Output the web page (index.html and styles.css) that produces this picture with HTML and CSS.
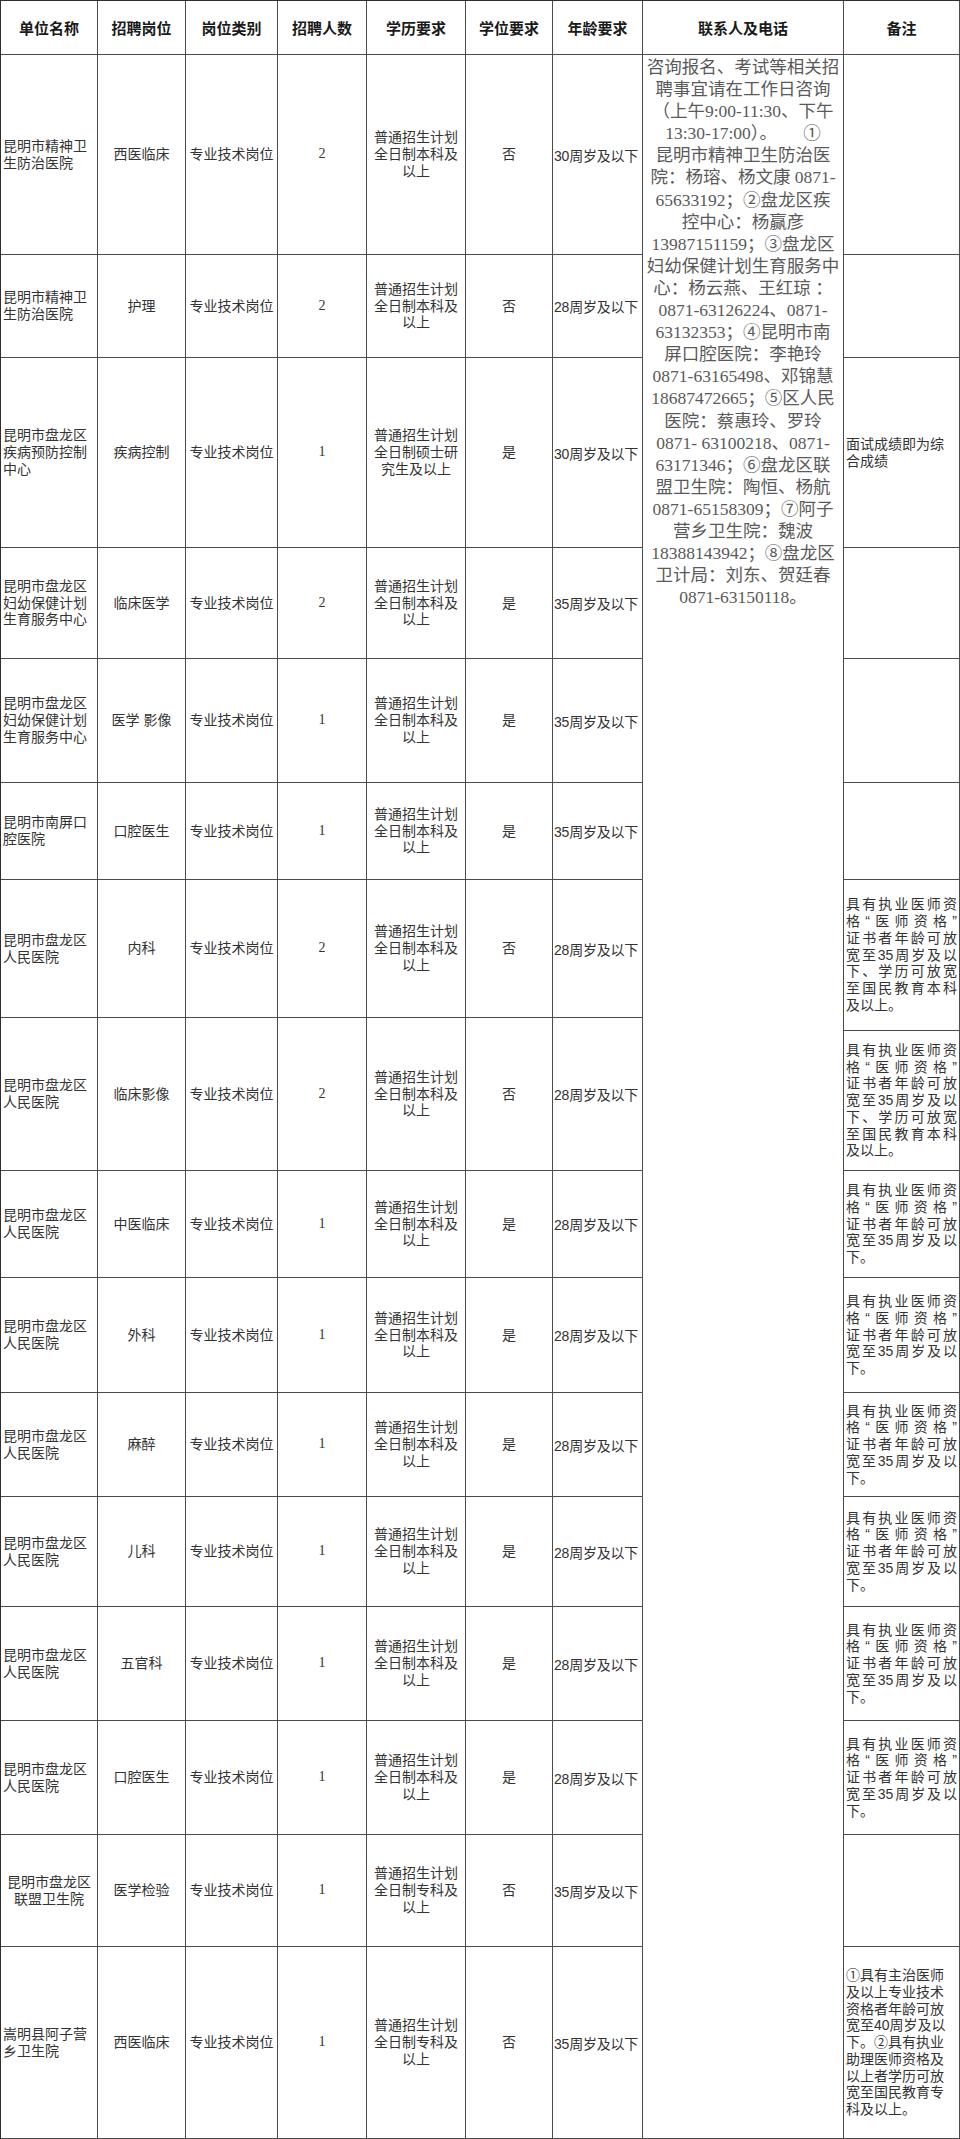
FILE: index.html
```html
<!DOCTYPE html>
<html lang="zh-CN">
<head>
<meta charset="utf-8">
<title>招聘岗位表</title>
<link rel="stylesheet" href="styles.css">
</head>
<body>
<div class="sheet">
  <div class="main">
    <div class="cell head">单位名称</div>
    <div class="cell head">招聘岗位</div>
    <div class="cell head">岗位类别</div>
    <div class="cell head">招聘人数</div>
    <div class="cell head">学历要求</div>
    <div class="cell head">学位要求</div>
    <div class="cell head">年龄要求</div>

    <div class="cell unit">昆明市精神卫生防治医院</div>
    <div class="cell mid">西医临床</div>
    <div class="cell mid">专业技术岗位</div>
    <div class="cell mid num">2</div>
    <div class="cell mid edu">普通招生计划全日制本科及以上</div>
    <div class="cell mid">否</div>
    <div class="cell age">30周岁及以下</div>

    <div class="cell unit">昆明市精神卫生防治医院</div>
    <div class="cell mid">护理</div>
    <div class="cell mid">专业技术岗位</div>
    <div class="cell mid num">2</div>
    <div class="cell mid edu">普通招生计划全日制本科及以上</div>
    <div class="cell mid">否</div>
    <div class="cell age">28周岁及以下</div>

    <div class="cell unit">昆明市盘龙区疾病预防控制中心</div>
    <div class="cell mid">疾病控制</div>
    <div class="cell mid">专业技术岗位</div>
    <div class="cell mid num">1</div>
    <div class="cell mid edu">普通招生计划全日制硕士研究生及以上</div>
    <div class="cell mid">是</div>
    <div class="cell age">30周岁及以下</div>

    <div class="cell unit">昆明市盘龙区妇幼保健计划生育服务中心</div>
    <div class="cell mid">临床医学</div>
    <div class="cell mid">专业技术岗位</div>
    <div class="cell mid num">2</div>
    <div class="cell mid edu">普通招生计划全日制本科及以上</div>
    <div class="cell mid">是</div>
    <div class="cell age">35周岁及以下</div>

    <div class="cell unit">昆明市盘龙区妇幼保健计划生育服务中心</div>
    <div class="cell mid">医学&nbsp;影像</div>
    <div class="cell mid">专业技术岗位</div>
    <div class="cell mid num">1</div>
    <div class="cell mid edu">普通招生计划全日制本科及以上</div>
    <div class="cell mid">是</div>
    <div class="cell age">35周岁及以下</div>

    <div class="cell unit">昆明市南屏口腔医院</div>
    <div class="cell mid">口腔医生</div>
    <div class="cell mid">专业技术岗位</div>
    <div class="cell mid num">1</div>
    <div class="cell mid edu">普通招生计划全日制本科及以上</div>
    <div class="cell mid">是</div>
    <div class="cell age">35周岁及以下</div>

    <div class="cell unit">昆明市盘龙区人民医院</div>
    <div class="cell mid">内科</div>
    <div class="cell mid">专业技术岗位</div>
    <div class="cell mid num">2</div>
    <div class="cell mid edu">普通招生计划全日制本科及以上</div>
    <div class="cell mid">否</div>
    <div class="cell age">28周岁及以下</div>

    <div class="cell unit">昆明市盘龙区人民医院</div>
    <div class="cell mid">临床影像</div>
    <div class="cell mid">专业技术岗位</div>
    <div class="cell mid num">2</div>
    <div class="cell mid edu">普通招生计划全日制本科及以上</div>
    <div class="cell mid">否</div>
    <div class="cell age">28周岁及以下</div>

    <div class="cell unit">昆明市盘龙区人民医院</div>
    <div class="cell mid">中医临床</div>
    <div class="cell mid">专业技术岗位</div>
    <div class="cell mid num">1</div>
    <div class="cell mid edu">普通招生计划全日制本科及以上</div>
    <div class="cell mid">是</div>
    <div class="cell age">28周岁及以下</div>

    <div class="cell unit">昆明市盘龙区人民医院</div>
    <div class="cell mid">外科</div>
    <div class="cell mid">专业技术岗位</div>
    <div class="cell mid num">1</div>
    <div class="cell mid edu">普通招生计划全日制本科及以上</div>
    <div class="cell mid">是</div>
    <div class="cell age">28周岁及以下</div>

    <div class="cell unit">昆明市盘龙区人民医院</div>
    <div class="cell mid">麻醉</div>
    <div class="cell mid">专业技术岗位</div>
    <div class="cell mid num">1</div>
    <div class="cell mid edu">普通招生计划全日制本科及以上</div>
    <div class="cell mid">是</div>
    <div class="cell age">28周岁及以下</div>

    <div class="cell unit">昆明市盘龙区人民医院</div>
    <div class="cell mid">儿科</div>
    <div class="cell mid">专业技术岗位</div>
    <div class="cell mid num">1</div>
    <div class="cell mid edu">普通招生计划全日制本科及以上</div>
    <div class="cell mid">是</div>
    <div class="cell age">28周岁及以下</div>

    <div class="cell unit">昆明市盘龙区人民医院</div>
    <div class="cell mid">五官科</div>
    <div class="cell mid">专业技术岗位</div>
    <div class="cell mid num">1</div>
    <div class="cell mid edu">普通招生计划全日制本科及以上</div>
    <div class="cell mid">是</div>
    <div class="cell age">28周岁及以下</div>

    <div class="cell unit">昆明市盘龙区人民医院</div>
    <div class="cell mid">口腔医生</div>
    <div class="cell mid">专业技术岗位</div>
    <div class="cell mid num">1</div>
    <div class="cell mid edu">普通招生计划全日制本科及以上</div>
    <div class="cell mid">是</div>
    <div class="cell age">28周岁及以下</div>

    <div class="cell unit center">昆明市盘龙区联盟卫生院</div>
    <div class="cell mid">医学检验</div>
    <div class="cell mid">专业技术岗位</div>
    <div class="cell mid num">1</div>
    <div class="cell mid edu">普通招生计划全日制专科及以上</div>
    <div class="cell mid">否</div>
    <div class="cell age">35周岁及以下</div>

    <div class="cell unit">嵩明县阿子营乡卫生院</div>
    <div class="cell mid">西医临床</div>
    <div class="cell mid">专业技术岗位</div>
    <div class="cell mid num">1</div>
    <div class="cell mid edu">普通招生计划全日制专科及以上</div>
    <div class="cell mid">否</div>
    <div class="cell age">35周岁及以下</div>
  </div>

  <div class="contact">
    <div class="cell head">联系人及电话</div>
    <div class="cell contact-body">咨询报名、考试等相关招<br>聘事宜请在工作日咨询<br>（上午9:00-11:30、下午<br>13:30-17:00）。&nbsp;&nbsp;&nbsp;&nbsp;&nbsp;&nbsp;①<br>昆明市精神卫生防治医<br>院：杨瑢、杨文康 0871-<br>65633192；②盘龙区疾<br>控中心：杨赢彦<br>13987151159；③盘龙区<br>妇幼保健计划生育服务中<br>心：杨云燕、王红琼 ：<br>0871-63126224、0871-<br>63132353；④昆明市南<br>屏口腔医院：李艳玲<br>0871-63165498、邓锦慧<br>18687472665；⑤区人民<br>医院：蔡惠玲、罗玲<br>0871- 63100218、0871-<br>63171346；⑥盘龙区联<br>盟卫生院：陶恒、杨航<br>0871-65158309；⑦阿子<br>营乡卫生院：魏波<br>18388143942；⑧盘龙区<br>卫计局：刘东、贺廷春<br>0871-63150118。</div>
  </div>

  <div class="remarks">
    <div class="cell head">备注</div>
    <div class="cell note"></div>
    <div class="cell note"></div>
    <div class="cell note"><div class="lines">面试成绩即为综<br>合成绩</div></div>
    <div class="cell note"></div>
    <div class="cell note"></div>
    <div class="cell note"></div>
    <div class="cell note">
      <div class="lines">
        <div class="just">具有执业医师资</div>
        <div class="just">格“医师资格”</div>
        <div class="just">证书者年龄可放</div>
        <div class="just">宽至35周岁及以</div>
        <div class="just">下、学历可放宽</div>
        <div class="just">至国民教育本科</div>
        <div>及以上。</div>
      </div>
    </div>
    <div class="cell note">
      <div class="lines">
        <div class="just">具有执业医师资</div>
        <div class="just">格“医师资格”</div>
        <div class="just">证书者年龄可放</div>
        <div class="just">宽至35周岁及以</div>
        <div class="just">下、学历可放宽</div>
        <div class="just">至国民教育本科</div>
        <div>及以上。</div>
      </div>
    </div>
    <div class="cell note">
      <div class="lines">
        <div class="just">具有执业医师资</div>
        <div class="just">格“医师资格”</div>
        <div class="just">证书者年龄可放</div>
        <div class="just">宽至35周岁及以</div>
        <div>下。</div>
      </div>
    </div>
    <div class="cell note">
      <div class="lines">
        <div class="just">具有执业医师资</div>
        <div class="just">格“医师资格”</div>
        <div class="just">证书者年龄可放</div>
        <div class="just">宽至35周岁及以</div>
        <div>下。</div>
      </div>
    </div>
    <div class="cell note">
      <div class="lines">
        <div class="just">具有执业医师资</div>
        <div class="just">格“医师资格”</div>
        <div class="just">证书者年龄可放</div>
        <div class="just">宽至35周岁及以</div>
        <div>下。</div>
      </div>
    </div>
    <div class="cell note">
      <div class="lines">
        <div class="just">具有执业医师资</div>
        <div class="just">格“医师资格”</div>
        <div class="just">证书者年龄可放</div>
        <div class="just">宽至35周岁及以</div>
        <div>下。</div>
      </div>
    </div>
    <div class="cell note">
      <div class="lines">
        <div class="just">具有执业医师资</div>
        <div class="just">格“医师资格”</div>
        <div class="just">证书者年龄可放</div>
        <div class="just">宽至35周岁及以</div>
        <div>下。</div>
      </div>
    </div>
    <div class="cell note">
      <div class="lines">
        <div class="just">具有执业医师资</div>
        <div class="just">格“医师资格”</div>
        <div class="just">证书者年龄可放</div>
        <div class="just">宽至35周岁及以</div>
        <div>下。</div>
      </div>
    </div>
    <div class="cell note"></div>
    <div class="cell note">
      <div class="lines">
        <div>①具有主治医师</div>
        <div>及以上专业技术</div>
        <div>资格者年龄可放</div>
        <div>宽至40周岁及以</div>
        <div>下。②具有执业</div>
        <div>助理医师资格及</div>
        <div>以上者学历可放</div>
        <div>宽至国民教育专</div>
        <div>科及以上。</div>
      </div>
    </div>
  </div>
</div>
</body>
</html>
```

FILE: styles.css
```css
html, body {
  margin: 0;
  padding: 0;
  background: #ffffff;
}

body {
  font-family: "Liberation Sans", "Noto Sans CJK SC", sans-serif;
  font-size: 14px;
  color: #333333;
}

.sheet {
  display: flex;
  width: 960px;
  height: 2139px;
  box-sizing: border-box;
  border-left: 1px solid #2e2e2e;
  border-top: 1px solid #2e2e2e;
}

.cell {
  box-sizing: border-box;
  border-right: 1px solid #4a4a4a;
  border-bottom: 1px solid #4a4a4a;
  overflow: hidden;
}

.main {
  display: grid;
  grid-template-columns: 97px 88px 92px 89px 99px 87px 90px;
  grid-template-rows: 54px 200px 103px 190px 111px 124px 97px 138px 153px 107px 115px 104px 110px 114px 114px 112px 192px;
}

.head {
  display: flex;
  align-items: center;
  justify-content: center;
  height: 54px;
  font-family: "Noto Sans CJK SC", sans-serif;
  font-weight: 700;
  font-size: 15px;
  color: #1a1a1a;
}

.unit {
  display: flex;
  align-items: center;
  padding: 0 2px 0 2px;
  line-height: 16.7px;
}

.unit.center {
  justify-content: center;
  text-align: center;
  padding: 0 4px;
}

.mid {
  display: flex;
  align-items: center;
  justify-content: center;
  text-align: center;
  line-height: 16.7px;
}

.edu {
  padding: 0 4px;
}

.num {
  font-family: "Liberation Serif", serif;
  font-size: 14px;
}

.age {
  display: flex;
  align-items: center;
  padding-left: 1px;
  white-space: nowrap;
  letter-spacing: -0.2px;
}

.contact {
  display: flex;
  flex-direction: column;
  width: 201px;
}

.contact-body {
  height: 2084px;
  padding-top: 1px;
  text-align: center;
  white-space: nowrap;
  font-family: "Liberation Serif", "Noto Sans CJK SC", serif;
  font-size: 17.5px;
  line-height: 22.1px;
  color: #5a5a5a;
}

.remarks {
  display: flex;
  flex-direction: column;
  width: 116px;
}

.note {
  display: flex;
  align-items: center;
  padding: 0 2px 0 2px;
  line-height: 16.8px;
  white-space: nowrap;
}

.note .lines {
  width: 100%;
}

.just {
  text-align: justify;
  text-align-last: justify;
}

.remarks .note:nth-child(2) { height: 200px; }
.remarks .note:nth-child(3) { height: 103px; }
.remarks .note:nth-child(4) { height: 190px; }
.remarks .note:nth-child(5) { height: 111px; }
.remarks .note:nth-child(6) { height: 124px; }
.remarks .note:nth-child(7) { height: 97px; }
.remarks .note:nth-child(8) { height: 151px; }
.remarks .note:nth-child(9) { height: 140px; }
.remarks .note:nth-child(10) { height: 107px; }
.remarks .note:nth-child(11) { height: 115px; }
.remarks .note:nth-child(12) { height: 104px; }
.remarks .note:nth-child(13) { height: 110px; }
.remarks .note:nth-child(14) { height: 114px; }
.remarks .note:nth-child(15) { height: 114px; }
.remarks .note:nth-child(16) { height: 112px; }
.remarks .note:nth-child(17) { height: 192px; }
```
